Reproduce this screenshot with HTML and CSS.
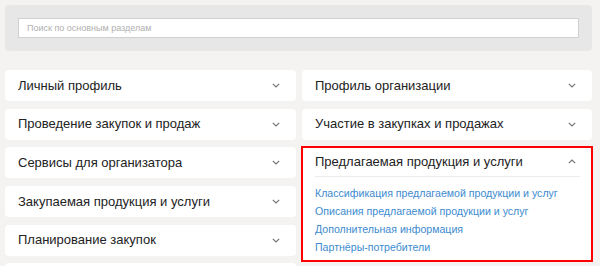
FILE: index.html
```html
<!DOCTYPE html>
<html lang="ru">
<head>
<meta charset="utf-8">
<title>Разделы</title>
<link rel="stylesheet" href="styles.css">
</head>
<body>
<div class="page">
  <div class="search-panel">
    <input class="search-input" type="text" placeholder="Поиск по основным разделам">
  </div>
  <div class="columns">
    <div class="column">
      <div class="card"><div class="card-head"><span class="card-title">Личный профиль</span><svg class="chev" width="8" height="5" viewBox="0 0 8 5"><path d="M0.8 0.8 L4 4 L7.2 0.8" fill="none" stroke="#707070" stroke-width="1.1"/></svg></div></div>
      <div class="card"><div class="card-head"><span class="card-title">Проведение закупок и продаж</span><svg class="chev" width="8" height="5" viewBox="0 0 8 5"><path d="M0.8 0.8 L4 4 L7.2 0.8" fill="none" stroke="#707070" stroke-width="1.1"/></svg></div></div>
      <div class="card"><div class="card-head"><span class="card-title">Сервисы для организатора</span><svg class="chev" width="8" height="5" viewBox="0 0 8 5"><path d="M0.8 0.8 L4 4 L7.2 0.8" fill="none" stroke="#707070" stroke-width="1.1"/></svg></div></div>
      <div class="card"><div class="card-head"><span class="card-title">Закупаемая продукция и услуги</span><svg class="chev" width="8" height="5" viewBox="0 0 8 5"><path d="M0.8 0.8 L4 4 L7.2 0.8" fill="none" stroke="#707070" stroke-width="1.1"/></svg></div></div>
      <div class="card"><div class="card-head"><span class="card-title">Планирование закупок</span><svg class="chev" width="8" height="5" viewBox="0 0 8 5"><path d="M0.8 0.8 L4 4 L7.2 0.8" fill="none" stroke="#707070" stroke-width="1.1"/></svg></div></div>
      <div class="card card-empty"></div>
    </div>
    <div class="column">
      <div class="card"><div class="card-head"><span class="card-title">Профиль организации</span><svg class="chev" width="8" height="5" viewBox="0 0 8 5"><path d="M0.8 0.8 L4 4 L7.2 0.8" fill="none" stroke="#707070" stroke-width="1.1"/></svg></div></div>
      <div class="card"><div class="card-head"><span class="card-title">Участие в закупках и продажах</span><svg class="chev" width="8" height="5" viewBox="0 0 8 5"><path d="M0.8 0.8 L4 4 L7.2 0.8" fill="none" stroke="#707070" stroke-width="1.1"/></svg></div></div>
      <div class="card card-open">
        <div class="card-head card-head-open"><span class="card-title">Предлагаемая продукция и услуги</span><svg class="chev" width="8" height="5" viewBox="0 0 8 5"><path d="M0.8 4.2 L4 1 L7.2 4.2" fill="none" stroke="#707070" stroke-width="1.1"/></svg></div>
        <ul class="links">
          <li><a href="#">Классификация предлагаемой продукции и услуг</a></li>
          <li><a href="#">Описания предлагаемой продукции и услуг</a></li>
          <li><a href="#">Дополнительная информация</a></li>
          <li><a href="#">Партнёры-потребители</a></li>
        </ul>
      </div>
    </div>
  </div>
</div>
</body>
</html>
```
FILE: styles.css
```css
html, body {
  margin: 0;
  padding: 0;
  background: #f4f3f1;
  overflow: hidden;
}
body {
  font-family: "Liberation Sans", Arial, sans-serif;
  color: #222;
}
.page {
  padding: 5px 8px 0 5px;
}
.search-panel {
  background: #e7e7e7;
  border-radius: 4px;
  padding: 13px;
  height: 20px;
}
.search-input {
  display: block;
  box-sizing: border-box;
  width: 100%;
  height: 20px;
  margin: 0;
  border: 1px solid #d0d0d0;
  background: #fff;
  padding: 0 8px;
  font-family: "Liberation Sans", Arial, sans-serif;
  font-size: 9px;
  outline: none;
}
.search-input::placeholder {
  color: #b0b0b0;
}
.columns {
  display: grid;
  grid-template-columns: 291px 1fr;
  column-gap: 6px;
  margin-top: 19px;
  align-items: start;
}
.column {
  display: flex;
  flex-direction: column;
  gap: 7.7px;
}
.card {
  background: #fff;
  border-radius: 4px;
}
.card-empty {
  height: 31px;
}
.card-head {
  display: flex;
  align-items: center;
  justify-content: space-between;
  height: 31px;
  padding: 0 16px 0 13px;
}
.card-title {
  font-size: 13px;
  line-height: 16px;
}
.chev {
  display: block;
}
.card-open {
  border-radius: 0;
  outline: 2px solid #f00;
  outline-offset: -1px;
  padding: 0 12px 0 13px;
}
.card-head-open {
  padding: 0 4px 0 0;
  height: 29px;
  border-bottom: 1px solid #ececec;
}
.links {
  list-style: none;
  margin: 0;
  padding: 6px 0 6px 0;
}
.links li {
  height: 18px;
  line-height: 18px;
}
.links a {
  color: #3c8bd0;
  font-size: 10.6px;
  text-decoration: none;
}
```
